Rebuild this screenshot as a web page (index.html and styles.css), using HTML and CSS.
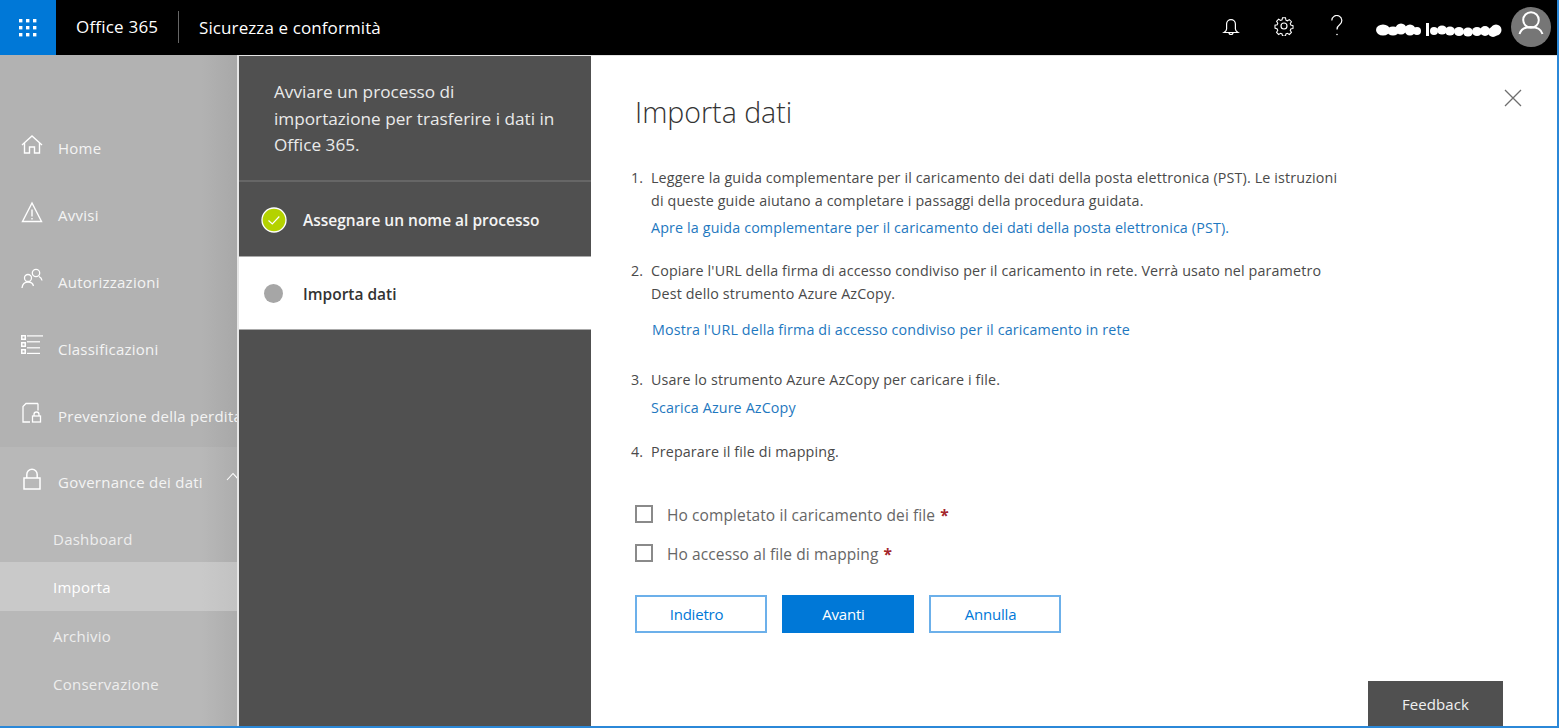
FILE: index.html
```html
<!DOCTYPE html>
<html lang="it">
<head>
<meta charset="utf-8">
<title>Importa dati</title>
<link rel="stylesheet" href="styles.css">
</head>
<body>
<div class="app">
  <header class="topbar">
    <div class="waffle">
      <svg width="18" height="18" viewBox="0 0 18 18" fill="#fff"><rect x="0" y="0" width="3.4" height="3.4"/><rect x="7" y="0" width="3.4" height="3.4"/><rect x="14" y="0" width="3.4" height="3.4"/><rect x="0" y="7" width="3.4" height="3.4"/><rect x="7" y="7" width="3.4" height="3.4"/><rect x="14" y="7" width="3.4" height="3.4"/><rect x="0" y="14" width="3.4" height="3.4"/><rect x="7" y="14" width="3.4" height="3.4"/><rect x="14" y="14" width="3.4" height="3.4"/></svg>
    </div>
    <span class="brand">Office 365</span>
    <span class="appname">Sicurezza e conformità</span>
    <div class="tools">
      <svg class="t-bell" width="18" height="20" viewBox="0 0 18 20" fill="none" stroke="#fff" stroke-width="1.2"><path d="M2 15.500c1.600-1 2.600-1.600 2.600-3.500V7a4.400 4.400 0 0 1 8.800 0v5c0 1.900 1 2.500 2.600 3.500z"/><path d="M7 15.500a2 2 0 0 0 4 0"/></svg>
      <svg class="t-gear" width="20" height="20" viewBox="0 0 20 20" fill="none" stroke="#fff" stroke-width="1.15"><circle cx="10" cy="10" r="3"/><path d="M8.400 1.200h3.200l.5 2.500 1.500.7 2.200-1.300 2.200 2.300-1.300 2.100.6 1.500 2.400.6v3l-2.400.6-.6 1.500 1.300 2.100-2.200 2.300-2.200-1.300-1.500.7-.5 2.200H8.400l-.5-2.200-1.500-.7-2.200 1.300-2.200-2.300 1.300-2.100-.6-1.500L.3 12.200v-3l2.400-.6.600-1.500L2 5l2.200-2.300 2.200 1.300 1.500-.7z" transform="translate(.7 .7) scale(.93)"/></svg>
      <svg class="t-help" width="14" height="22" viewBox="0 0 14 22" fill="none" stroke="#fff" stroke-width="1.200"><path d="M1.800 5.500a5 5 0 1 1 8 4c-2 1.500-2.800 2.500-2.800 5"/><circle cx="7" cy="19.500" r=".8" fill="#fff" stroke="none"/></svg>
      <svg class="t-name" width="128" height="16" viewBox="0 0 128 16" fill="#fff"><ellipse cx="8" cy="8" rx="7" ry="5.500"/><ellipse cx="18" cy="9" rx="6" ry="4.500"/><circle cx="26" cy="7" r="5.500"/><circle cx="35" cy="8" r="5.500"/><circle cx="42" cy="9" r="4"/><rect x="51" y="1" width="3" height="13"/><circle cx="59" cy="9" r="4"/><ellipse cx="67" cy="8" rx="5" ry="4.500"/><ellipse cx="75" cy="9" rx="5" ry="4.500"/><ellipse cx="84" cy="9.500" rx="5" ry="4.500"/><ellipse cx="93" cy="10" rx="5" ry="4.500"/><ellipse cx="102" cy="9.500" rx="5" ry="4.500"/><ellipse cx="110" cy="9" rx="5" ry="5"/><ellipse cx="118" cy="10" rx="5" ry="5"/><circle cx="121" cy="8" r="5.500"/></svg>
      <div class="avatar">
        <svg width="40" height="40" viewBox="0 0 40 40" fill="none" stroke="#fff" stroke-width="2"><circle cx="20" cy="13" r="7.800"/><path d="M8.500 27c1.500-5 6-7 11.500-7s10 2 11.500 7"/></svg>
      </div>
    </div>
  </header>
  <div class="body-row">
    <nav class="sidebar">
      <ul class="nav-top">
        <li class="nav-item"><svg class="nav-ic" width="22" height="22" viewBox="0 0 22 22" fill="none" stroke="#fff" stroke-width="1.400"><path d="M1 11 11 2l10 9"/><path d="M3.500 9v10h5v-6h5v6h5V9"/></svg><span>Home</span></li>
        <li class="nav-item"><svg class="nav-ic" width="22" height="22" viewBox="0 0 22 22" fill="none" stroke="#fff" stroke-width="1.400"><path d="M11 2 1.500 20.500h19z"/><path d="M11 8.500v7M11 17v1.500"/></svg><span>Avvisi</span></li>
        <li class="nav-item"><svg class="nav-ic" width="22" height="22" viewBox="0 0 22 22" fill="none" stroke="#fff" stroke-width="1.300"><circle cx="15" cy="5" r="3.700"/><circle cx="7" cy="10" r="3.500"/><path d="M1 20c.4-3.500 2.800-6 6-6s5 1.800 5.500 4M18 8.500c1.500.8 2.700 2.300 3 4"/></svg><span>Autorizzazioni</span></li>
        <li class="nav-item"><svg class="nav-ic" width="22" height="22" viewBox="0 0 22 22" fill="#fff"><path d="M0 0h5v5H0zm1.500 1.500v2h2v-2zM0 7h5v5H0zm1.500 1.500v2h2v-2zM0 14h5v5H0zm1.500 1.500v2h2v-2z" fill-rule="evenodd"/><rect x="6" y=".3" width="16" height="1.200"/><rect x="6" y="6.200" width="13" height="1.200"/><rect x="6" y="12.200" width="13" height="1.200"/><rect x="6" y="17.800" width="13" height="1.200"/></svg><span>Classificazioni</span></li>
        <li class="nav-item nav-clip"><svg class="nav-ic" width="22" height="22" viewBox="0 0 22 22" fill="none" stroke="#fff" stroke-width="1.300"><path d="M17 1.500H5L2 4.500v15.500h7"/><path d="M17 1.500v7"/><rect x="11.500" y="14" width="8" height="6"/><path d="M13 14v-1.500a2.500 2.500 0 0 1 5 0V14"/></svg><span>Prevenzione della perdita</span></li>
      </ul>
      <div class="nav-group">
        <div class="nav-item nav-gov"><svg class="nav-ic" width="22" height="22" viewBox="0 0 22 22" fill="none" stroke="#fff" stroke-width="1.500"><rect x="3" y="10" width="16" height="11"/><path d="M5.800 10V6.500a5.200 5.200 0 0 1 10.400 0V10"/></svg><span>Governance dei dati</span><svg class="caret" width="14" height="9" viewBox="0 0 14 9" fill="none" stroke="#fff" stroke-width="1.100"><path d="M1 8l6-6.500L13 8"/></svg></div>
        <ul class="subnav">
          <li>Dashboard</li>
          <li class="sub-active">Importa</li>
          <li>Archivio</li>
          <li>Conservazione</li>
        </ul>
      </div>
    </nav>
    <section class="panel">
      <aside class="wizard">
        <p class="wiz-title">Avviare un processo di<br>importazione per trasferire i dati in<br>Office 365.</p>
        <div class="step step-done">
          <svg class="step-ic" width="26" height="26" viewBox="0 0 26 26"><circle cx="13" cy="13" r="12" fill="#b4d200" stroke="#fff" stroke-width="1.300"/><path d="M7.500 13.500l3.800 3.500 7-7.500" fill="none" stroke="#fff" stroke-width="1.200"/></svg>
          <span>Assegnare un nome al processo</span>
        </div>
        <div class="step step-current">
          <span class="dot"></span>
          <span>Importa dati</span>
        </div>
      </aside>
      <main class="content">
        <h1 class="title">Importa dati</h1>
        <ol class="steps">
          <li class="s1">Leggere la guida complementare per il caricamento dei dati della posta elettronica (PST). Le istruzioni<br>di queste guide aiutano a completare i passaggi della procedura guidata.
            <a class="link l1">Apre la guida complementare per il caricamento dei dati della posta elettronica (PST).</a></li>
          <li class="s2">Copiare l'URL della firma di accesso condiviso per il caricamento in rete. Verrà usato nel parametro<br>Dest dello strumento Azure AzCopy.
            <a class="link l2">Mostra l'URL della firma di accesso condiviso per il caricamento in rete</a></li>
          <li class="s3">Usare lo strumento Azure AzCopy per caricare i file.
            <a class="link l3">Scarica Azure AzCopy</a></li>
          <li class="s4">Preparare il file di mapping.</li>
        </ol>
        <label class="check c1"><span class="box"></span>Ho completato il caricamento dei file <b class="req">*</b></label>
        <label class="check c2"><span class="box"></span>Ho accesso al file di mapping <b class="req">*</b></label>
        <div class="buttons">
          <button class="btn">Indietro</button>
          <button class="btn btn-primary">Avanti</button>
          <button class="btn">Annulla</button>
        </div>
        <button class="close" aria-label="Chiudi"><svg width="18" height="18" viewBox="0 0 18 18" fill="none" stroke="#6e6e6e" stroke-width="1.300"><path d="M1 1l16 16M17 1 1 17"/></svg></button>
        <div class="feedback">Feedback</div>
      </main>
    </section>
  </div>
</div>
</body>
</html>
```
FILE: styles.css
```css
* { box-sizing: border-box; }
html, body { margin: 0; padding: 0; height: 100%; overflow: hidden; }
body { font-family: "Open Sans", "Noto Sans", sans-serif; color: #444; background: #fff; }
ul, ol { list-style: none; margin: 0; padding: 0; }
.app { width: 1559px; height: 728px; display: flex; flex-direction: column; border-right: 2px solid #2b88d8; border-bottom: 2px solid #2b88d8; }

.topbar { height: 55px; flex: none; background: #000; color: #fff; display: flex; align-items: center; }
.waffle { width: 56px; height: 55px; background: #0078d7; display: flex; align-items: center; justify-content: center; }
.brand { font-size: 17px; letter-spacing: .2px; padding: 0 20px; margin-top: -1px; line-height: 32px; width: 123px; border-right: 1px solid #666; white-space: nowrap; }
.appname { font-size: 17px; letter-spacing: .1px; padding-left: 20px; margin-top: -1px; white-space: nowrap; }
.tools { margin-left: auto; display: flex; align-items: center; height: 55px; }
.t-bell { margin-right: 34px; margin-top: -2px; }
.t-gear { margin-right: 36px; margin-top: -3px; }
.t-help { margin-right: 31px; margin-top: -4px; }
.t-name { margin-right: 8px; margin-top: 4px; }
.avatar { width: 40px; height: 40px; border-radius: 50%; background: #767676; margin-right: 6px; margin-top: -1px; overflow: hidden; }
.avatar svg { display: block; }

.body-row { flex: 1; display: flex; min-height: 0; }
.sidebar { width: 237px; flex: none; background: linear-gradient(90deg, #b2b2b2 0, #b2b2b2 85%, #a8a8a8 100%); color: #f4f4f4; padding-top: 59px; overflow: hidden; font-size: 15px; letter-spacing: .25px; display: flex; flex-direction: column; }
.nav-item { height: 67px; display: flex; align-items: center; padding-left: 21px; white-space: nowrap; }
.nav-ic { flex: none; margin-right: 15px; margin-top: -6px; }
.nav-clip { margin-bottom: -2px; }
.nav-group { flex: 1; background: linear-gradient(90deg, #b8b8b8 0, #b8b8b8 85%, #adadad 100%); }
.nav-gov { position: relative; padding-top: 3px; }
.caret { position: absolute; left: 226px; top: 25px; }
.subnav { color: #eee; }
.subnav li { height: 48.400px; line-height: 51px; padding-left: 53px; }
.sub-active { background: linear-gradient(90deg, #c9c9c9 0, #c9c9c9 85%, #c2c2c2 100%); color: #fff; }

.panel { flex: 1; min-width: 0; display: flex; background: #fff; border-top: 1px solid #e4e4e4; }
.wizard { width: 354px; flex: none; background: #505050; color: #eaeaea; border-left: 2px solid #e6e6e6; }
.wiz-title { margin: 0; height: 126px; padding: 23px 0 0 35px; font-size: 17.200px; line-height: 26.500px; border-bottom: 2px solid #666; }
.step { height: 74px; display: flex; align-items: center; font-size: 15.500px; font-weight: 600; }
.step-done { color: #f4f4f4; padding: 2px 0 0 22px; }
.step-ic { margin-right: 16px; }
.step-current { background: #fff; color: #333; padding: 1px 0 0 25px; border-top: 1px solid #aaa; border-bottom: 1px solid #aaa; }
.dot { width: 19px; height: 19px; border-radius: 50%; background: #a6a6a6; margin-right: 20px; }

.content { flex: 1; min-width: 0; position: relative; padding-left: 44px; font-size: 14.300px; color: #4a4a4a; letter-spacing: .14px; }
.title { margin: 0; font-size: 28.500px; font-weight: 300; color: #333; letter-spacing: 0; line-height: 40px; padding-top: 36px; height: 110px; }
.steps { counter-reset: n; }
.steps li { counter-increment: n; position: relative; padding-left: 16px; line-height: 23px; }
.steps li::before { content: counter(n) "."; position: absolute; left: -4px; }
.link { display: block; color: #1e78c0; }
.l1 { margin-top: 4px; }
.s1 { height: 93px; }
.s2 { height: 109px; }
.l2 { margin-top: 13px; margin-left: 1px; }
.s3 { height: 72px; }
.l3 { margin-top: 5px; }
.s4 { height: 60px; }
.check { display: flex; align-items: center; height: 30px; font-size: 15.500px; color: #666; letter-spacing: .1px; }
.c1 { margin-bottom: 9px; }
.box { width: 18px; height: 18px; border: 2px solid #8a8a8a; margin-right: 14px; margin-top: -3px; flex: none; }
.req { color: #a4262c; margin-left: 5px; font-weight: 700; }
.buttons { display: flex; gap: 15px; margin-top: 26px; }
.btn { width: 132px; height: 38px; border: 2px solid #6cb0ea; background: #fff; color: #0078d7; font: inherit; font-size: 15px; letter-spacing: -.2px; padding: 0 9px 0 0; }
.btn-primary { background: #0078d7; border-color: #0078d7; color: #fff; }
.close { position: absolute; right: 35px; top: 33px; background: none; border: 0; padding: 0; line-height: 0; }
.feedback { position: absolute; right: 54px; bottom: 0; width: 135px; height: 45px; background: #505050; color: #f0f0f0; font-size: 15px; letter-spacing: .1px; display: flex; align-items: center; justify-content: center; }
```
